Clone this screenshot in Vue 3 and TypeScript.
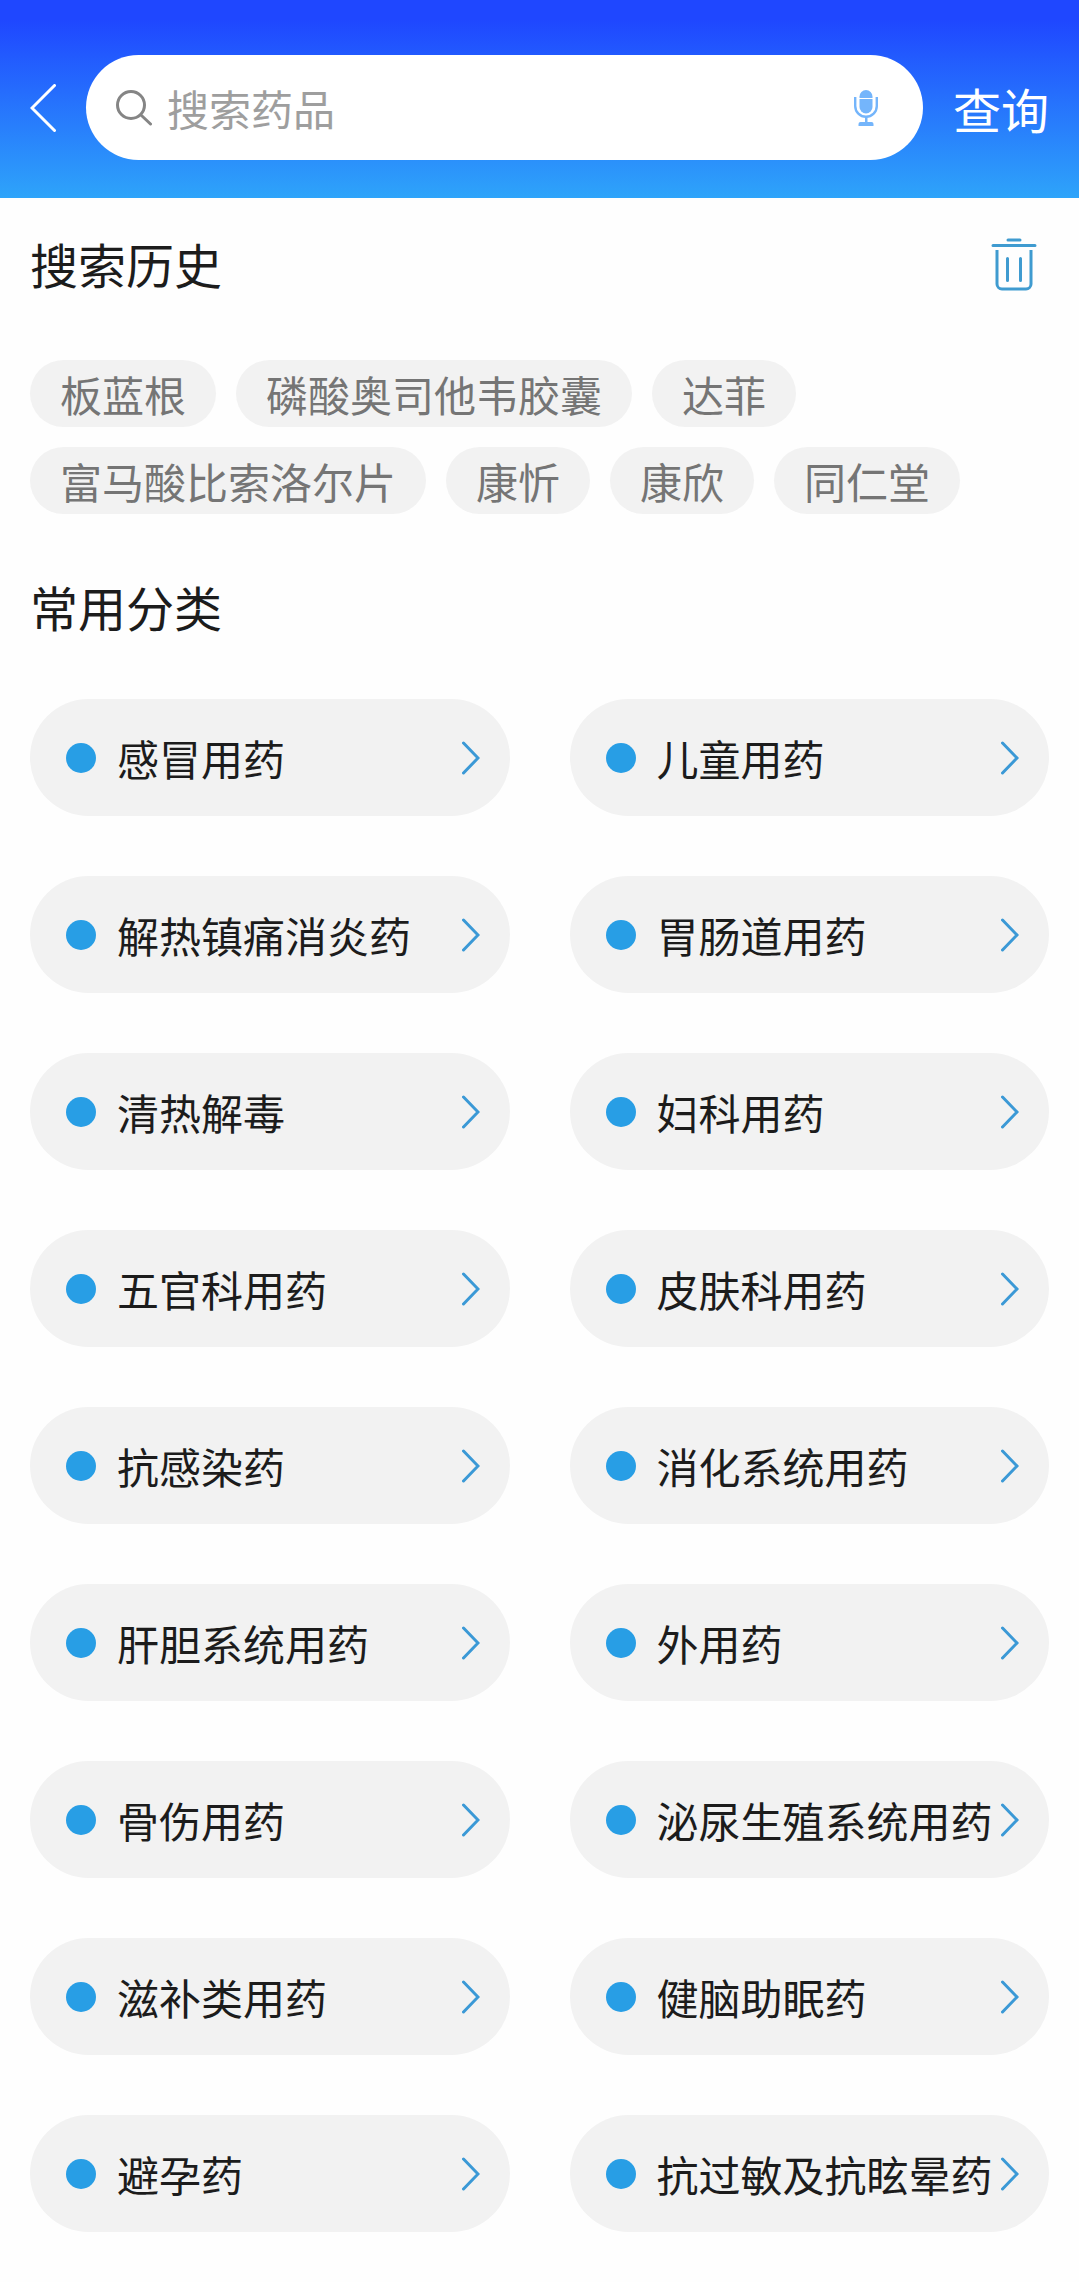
<script setup lang="ts">
import { ref } from 'vue'

const keyword = ref('')

const history = ref<string[]>([
  '板蓝根',
  '磷酸奥司他韦胶囊',
  '达菲',
  '富马酸比索洛尔片',
  '康忻',
  '康欣',
  '同仁堂',
])

const categories: string[] = [
  '感冒用药',
  '儿童用药',
  '解热镇痛消炎药',
  '胃肠道用药',
  '清热解毒',
  '妇科用药',
  '五官科用药',
  '皮肤科用药',
  '抗感染药',
  '消化系统用药',
  '肝胆系统用药',
  '外用药',
  '骨伤用药',
  '泌尿生殖系统用药',
  '滋补类用药',
  '健脑助眠药',
  '避孕药',
  '抗过敏及抗眩晕药',
]

function clearHistory(): void {
  history.value = []
}

function pick(term: string): void {
  keyword.value = term
}
</script>

<template>
  <div class="page">
    <header class="top-bar">
      <button class="icon-button" type="button" aria-label="返回">
        <svg width="26" height="48" viewBox="0 0 26 48" fill="none" stroke="#fff" stroke-width="3" stroke-linecap="round">
          <path d="M24.5 1.5 2 24l22.500 22.500" />
        </svg>
      </button>
      <form class="search-box" role="search" @submit.prevent>
        <svg width="36" height="36" viewBox="0 0 36 36" fill="none" stroke="#858585" stroke-width="3" stroke-linecap="round">
          <circle cx="15" cy="15" r="13.5" />
          <path d="M25.5 25.5l9 8.5" />
        </svg>
        <input v-model="keyword" class="search-input" type="text" placeholder="搜索药品" aria-label="搜索药品" />
        <button class="icon-button" type="button" aria-label="语音输入">
          <svg width="24" height="36" viewBox="0 0 24 36" fill="#74b5fb">
            <path d="M5.5 8V6.500a6.500 6.500 0 0 1 13 0V8z" />
            <path d="M5.500 9h13v8a6.500 6.500 0 0 1-13 0z" />
            <path d="M1.200 7v9a10.800 10.800 0 0 0 21.600 0V7" fill="none" stroke="#74b5fb" stroke-width="2.400" />
            <path d="M11 27h2.500v5h4q2 0 2 2v2h-15v-2q0-2 2-2H11z" />
          </svg>
        </button>
      </form>
      <button class="query-button" type="button">查询</button>
    </header>

    <main class="content">
      <section class="section">
        <div class="section-head">
          <h2 class="section-title">搜索历史</h2>
          <button class="icon-button" type="button" aria-label="清空搜索历史" @click="clearHistory">
            <svg width="46" height="56" viewBox="0 0 46 56" fill="none" stroke="#3f9bd0" stroke-width="3" stroke-linecap="round">
              <path d="M17 5h12M2 10.500h42" />
              <path d="M6 15v34a5 5 0 0 0 5 5h24a5 5 0 0 0 5-5V15" stroke-linecap="butt" />
              <path d="M16.500 23.500v22M29.500 23.500v22" />
            </svg>
          </button>
        </div>
        <ul class="tags">
          <li v-for="term in history" :key="term">
            <button class="tag" type="button" @click="pick(term)">{{ term }}</button>
          </li>
        </ul>
      </section>

      <section class="section">
        <div class="section-head">
          <h2 class="section-title">常用分类</h2>
        </div>
        <ul class="categories">
          <li v-for="name in categories" :key="name">
            <a class="category" href="#">
              <span class="dot"></span>
              <span class="category-name">{{ name }}</span>
              <svg width="18" height="34" viewBox="0 0 18 34" fill="none" stroke="#3b99d6" stroke-width="3" stroke-linecap="round">
                <path d="M1.500 2 16 17 1.500 32" />
              </svg>
            </a>
          </li>
        </ul>
      </section>
    </main>
  </div>
</template>

<style>
body {
  margin: 0;
  background: #fefefe;
}
</style>

<style scoped>
.page {
  font-family: 'Noto Sans CJK SC', 'Noto Sans', sans-serif;
  font-size: 42px;
  color: #1c1c1c;
}

button,
input {
  margin: 0;
  padding: 0;
  border: 0;
  background: none;
  font: inherit;
  color: inherit;
}

svg {
  display: block;
  flex: none;
}

ul {
  margin: 0;
  padding: 0;
  list-style: none;
}

.icon-button {
  flex: none;
  cursor: pointer;
}

.top-bar {
  display: flex;
  align-items: center;
  gap: 30px;
  padding: 55px 30px 38px;
  background: linear-gradient(#1f47ff 10%, #2ea4fa);
}

.search-box {
  display: flex;
  flex: 1;
  align-items: center;
  min-width: 0;
  height: 105px;
  padding: 0 45px 0 30px;
  border-radius: 53px;
  background: #fff;
  box-sizing: border-box;
}

.search-input {
  flex: 1;
  min-width: 0;
  margin: 0 15px;
  line-height: 60px;
  outline: none;
}

.search-input::placeholder {
  color: #9e9e9e;
  opacity: 1;
}

.query-button {
  flex: none;
  font-size: 48px;
  line-height: 70px;
  color: #fff;
  cursor: pointer;
}

.content {
  padding: 30px 30px 50px;
}

.section + .section {
  margin-top: 57px;
}

.section-head {
  display: flex;
  align-items: center;
  justify-content: space-between;
  padding-right: 12px;
}

.section-title {
  margin: 0;
  font-size: 48px;
  font-weight: 400;
  line-height: 70px;
}

.tags {
  display: flex;
  flex-wrap: wrap;
  gap: 20px;
  margin-top: 62px;
}

.tag {
  display: block;
  padding: 0 30px;
  border-radius: 34px;
  background: #f2f2f2;
  line-height: 67px;
  color: #757575;
  cursor: pointer;
}

.categories {
  display: grid;
  grid-template-columns: repeat(2, minmax(0, 1fr));
  gap: 60px;
  margin-top: 58px;
}

.category {
  display: flex;
  align-items: center;
  padding: 0 30px 0 36px;
  border-radius: 59px;
  background: #f2f2f2;
  line-height: 117px;
  color: inherit;
  text-decoration: none;
}

.dot {
  flex: none;
  width: 30px;
  height: 30px;
  margin-right: 21px;
  border-radius: 50%;
  background: #289ee5;
}

.category-name {
  flex: 1;
  min-width: 0;
  white-space: nowrap;
}
</style>
